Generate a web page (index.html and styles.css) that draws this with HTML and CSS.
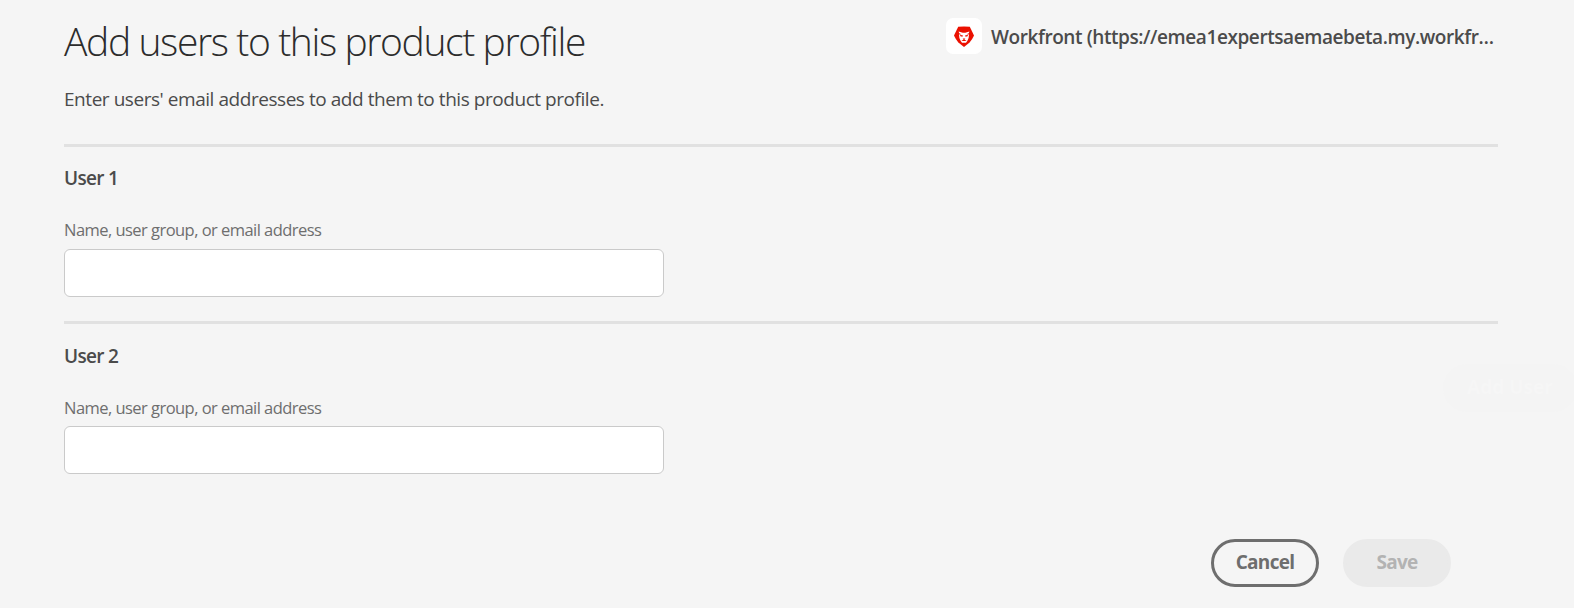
FILE: index.html
```html
<!DOCTYPE html>
<html lang="en">
<head>
<meta charset="utf-8">
<title>Add users to this product profile</title>
<link rel="stylesheet" href="styles.css">
</head>
<body>
<main class="page">
  <header class="header">
    <div class="intro">
      <h1 class="title">Add users to this product profile</h1>
      <p class="subtitle">Enter users' email addresses to add them to this product profile.</p>
    </div>
    <div class="product">
      <span class="product-icon">
        <svg width="20" height="21" viewBox="0 0 20 21">
          <path fill="#eb1000" d="M4.200 .8Q10 0 15.800 .8L20 9.600Q18.600 13.200 15.600 16.400L10 21L4.400 16.400Q1.400 13.200 0 9.600Z"/>
          <path fill="#fff" d="M4.600 5.600L8.800 6.800H11.200L15.400 5.600L14.800 7.200L12.600 8.200L15 8.400L14.600 12L13.400 14.800L12 16.800H8L6.600 14.800L5.400 12L5 8.400L7.400 8.200L5.200 7.200Z"/>
          <path fill="#eb1000" d="M6 8.800L9 9.600L8.400 10.800L6.400 10.200ZM14 8.800L11 9.600L11.600 10.800L13.600 10.200ZM8.600 12.600H11.400L10.400 13.600L12.600 15H7.400L9.600 13.600Z"/>
        </svg>
      </span>
      <span class="product-name">Workfront (https://emea1expertsaemaebeta.my.workfr…</span>
    </div>
  </header>
  <section class="user">
    <h2 class="user-title">User 1</h2>
    <label class="label" for="user1">Name, user group, or email address</label>
    <input class="field" id="user1" type="text">
  </section>
  <section class="user user-second">
    <h2 class="user-title">User 2</h2>
    <label class="label" for="user2">Name, user group, or email address</label>
    <input class="field" id="user2" type="text">
  </section>
  <footer class="actions">
    <button class="button cancel"><span>Cancel</span></button>
    <button class="button save" disabled><span>Save</span></button>
  </footer>
  <div class="backdrop-button">Add User</div>
</main>
</body>
</html>
```
FILE: styles.css
```css
* { box-sizing: border-box; }
body {
  margin: 0;
  background: #f5f5f5;
  font-family: "Open Sans", "Noto Sans", sans-serif;
  color: #4b4b4b;
}
.page {
  position: relative;
  height: 608px;
  padding: 18px 76px 0 64px;
  overflow: hidden;
}
.header {
  display: flex;
  justify-content: space-between;
  height: 126px;
}
.title {
  margin: 0;
  font-size: 39px;
  font-weight: 300;
  line-height: 45px;
  letter-spacing: -1.38px;
  color: #2c2c2c;
  white-space: nowrap;
}
.subtitle {
  margin: 21px 0 0;
  font-size: 19px;
  line-height: 30px;
  letter-spacing: -0.45px;
  white-space: nowrap;
}
.product {
  display: flex;
  gap: 9px;
  width: 552px;
  height: 36px;
}
.product-icon {
  display: grid;
  place-items: center;
  width: 36px;
  height: 36px;
  border-radius: 7px;
  background: #fff;
}
.product-name {
  font-size: 19px;
  font-weight: 600;
  line-height: 38px;
  letter-spacing: -0.42px;
  white-space: nowrap;
}
.user {
  display: flex;
  flex-direction: column;
  height: 177px;
  background: linear-gradient(#e1e1e1, #e1e1e1) 0 0 / 100% 3px no-repeat;
}
.user-title {
  margin: 20px 0 0;
  font-size: 19px;
  font-weight: 600;
  line-height: 28px;
  letter-spacing: -0.7px;
}
.user-second .user-title { margin-top: 21px; }
.label {
  margin-top: 26px;
  font-size: 16.500px;
  line-height: 24px;
  letter-spacing: -0.54px;
  color: #6e6e6e;
}
.field {
  width: 600px;
  height: 48px;
  margin-top: 7px;
  border: 1px solid #cacaca;
  border-radius: 6px;
  background: #fff;
}
.user-second .field { margin-top: 6px; }
.actions {
  display: flex;
  justify-content: flex-end;
  gap: 24px;
  padding: 41px 47px 0 0;
}
.button {
  width: 108px;
  height: 48px;
  padding: 0 0 2px;
  border: 3px solid #6e6e6e;
  border-radius: 24px;
  background: transparent;
  color: #6e6e6e;
  font: inherit;
  font-size: 19px;
  font-weight: 700;
  letter-spacing: -0.7px;
}
.save {
  border-color: #eaeaea;
  background: #eaeaea;
  color: #b3b3b3;
}
.backdrop-button {
  position: absolute;
  left: 1443px;
  top: 364px;
  width: 134px;
  height: 48px;
  border-radius: 24px;
  background: #f4f4f4;
  color: #f6f6f6;
  font-size: 19px;
  font-weight: 700;
  line-height: 46px;
  text-align: center;
}
```
